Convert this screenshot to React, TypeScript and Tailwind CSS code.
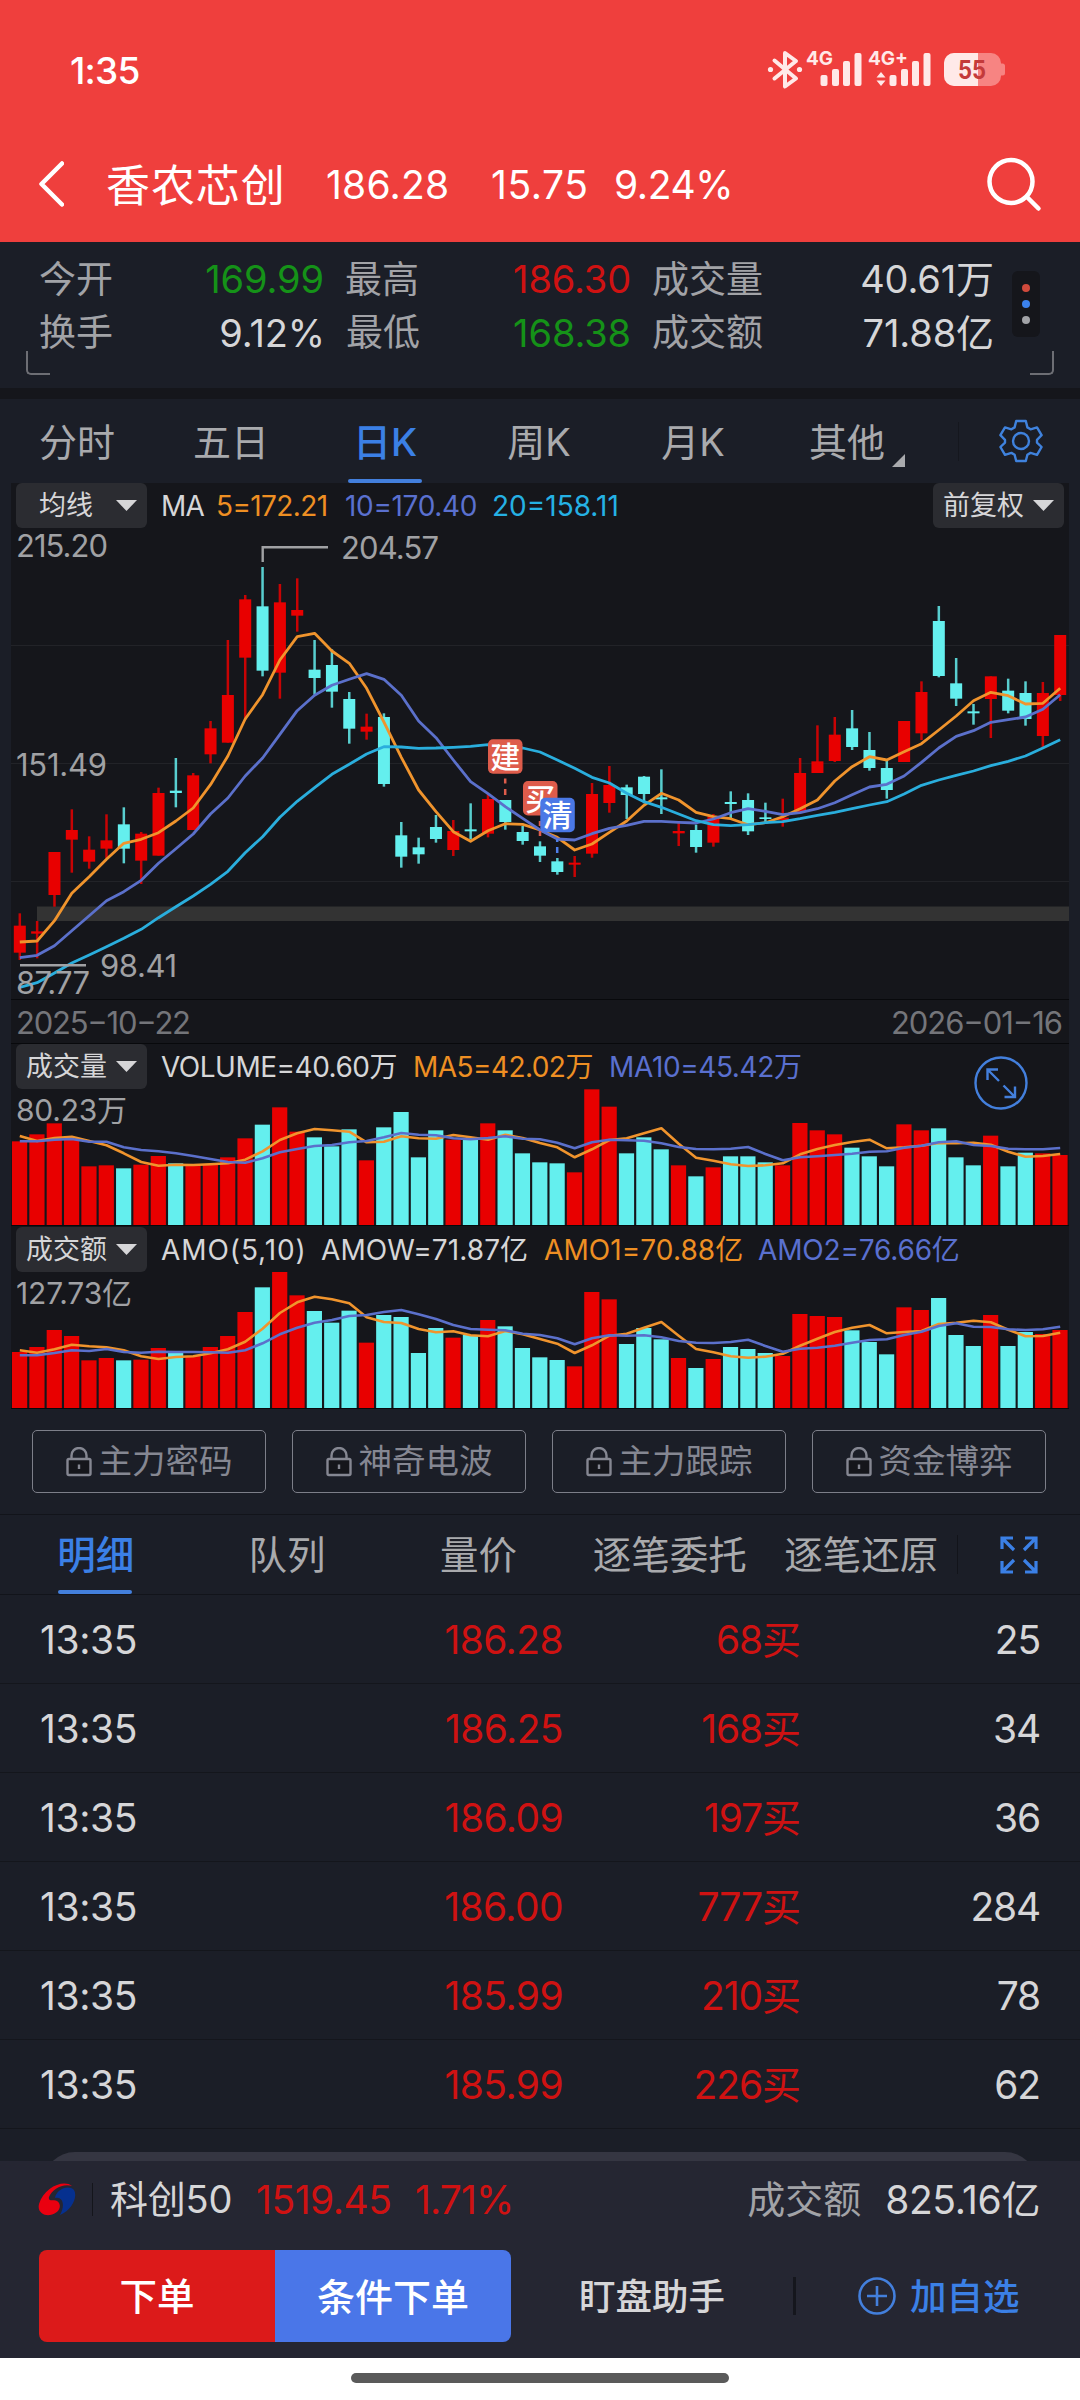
import { clsx } from "clsx";

const UP = "#e80000";
const DOWN = "#64efee";
const PITCH = 17.34;

// [direction, body top, body bottom, high, low] for each day, on a grid three times finer than the chart
const candles: [string, number, number, number, number][] = [
  ["r", 1217, 1298, 1180, 1320],
  ["r", 1234, 1241, 1203, 1315],
  ["r", 996, 1125, 996, 1160],
  ["r", 930, 959, 868, 1058],
  ["r", 989, 1025, 949, 1046],
  ["r", 961, 986, 883, 1015],
  ["c", 913, 986, 862, 1030],
  ["r", 941, 1022, 936, 1092],
  ["r", 819, 1007, 803, 1007],
  ["c", 812, 819, 714, 862],
  ["r", 766, 930, 759, 930],
  ["r", 625, 703, 603, 730],
  ["r", 525, 668, 360, 668],
  ["r", 238, 413, 225, 600],
  ["c", 259, 452, 141, 469],
  ["r", 247, 458, 192, 536],
  ["r", 270, 287, 175, 335],
  ["c", 449, 474, 360, 524],
  ["c", 435, 515, 388, 563],
  ["c", 537, 626, 516, 671],
  ["r", 620, 635, 581, 659],
  ["c", 591, 792, 580, 800],
  ["c", 946, 1010, 906, 1043],
  ["c", 982, 1003, 953, 1031],
  ["c", 921, 957, 885, 968],
  ["r", 933, 990, 900, 1008],
  ["c", 928, 934, 850, 958],
  ["r", 837, 941, 822, 952],
  ["c", 840, 906, 840, 929],
  ["c", 936, 963, 918, 974],
  ["c", 979, 1007, 964, 1026],
  ["c", 1024, 1056, 1014, 1064],
  ["r", 1028, 1034, 1008, 1071],
  ["r", 822, 1001, 789, 1013],
  ["r", 795, 849, 738, 878],
  ["c", 802, 825, 794, 897],
  ["c", 770, 822, 768, 850],
  ["c", 832, 838, 748, 882],
  ["r", 933, 940, 908, 978],
  ["c", 930, 981, 914, 998],
  ["r", 890, 968, 882, 980],
  ["c", 846, 852, 814, 896],
  ["c", 840, 934, 820, 945],
  ["c", 892, 897, 848, 908],
  ["r", 893, 900, 836, 920],
  ["r", 759, 876, 714, 876],
  ["r", 724, 759, 616, 759],
  ["r", 644, 723, 591, 726],
  ["c", 625, 681, 570, 690],
  ["c", 690, 744, 636, 752],
  ["c", 744, 810, 722, 836],
  ["r", 603, 726, 603, 726],
  ["r", 516, 640, 484, 660],
  ["c", 303, 468, 258, 472],
  ["c", 490, 536, 414, 558],
  ["c", 574, 580, 552, 614],
  ["r", 469, 537, 469, 654],
  ["c", 512, 572, 476, 580],
  ["c", 519, 597, 484, 617],
  ["r", 519, 648, 486, 684],
  ["r", 345, 525, 345, 543],
];

const ma5 = [1266, 1263, 1202, 1120, 1070, 1018, 970, 958, 938, 903, 864, 794, 708, 597, 524, 420, 350, 340, 393, 430, 505, 606, 712, 810, 875, 935, 964, 932, 911, 913, 930, 952, 990, 972, 937, 903, 856, 820, 840, 877, 890, 896, 914, 908, 890, 866, 840, 783, 740, 710, 720, 695, 671, 630, 588, 542, 517, 527, 552, 550, 505];
const ma10 = [1313, 1306, 1277, 1232, 1187, 1142, 1115, 1081, 1030, 986, 942, 882, 834, 768, 714, 643, 572, 526, 496, 478, 461, 478, 526, 603, 653, 720, 785, 821, 860, 895, 930, 957, 960, 941, 925, 916, 904, 904, 907, 909, 897, 878, 866, 874, 884, 878, 866, 848, 824, 801, 793, 768, 727, 684, 649, 632, 607, 599, 591, 568, 524];
const ma20 = [1402, 1388, 1359, 1329, 1305, 1280, 1255, 1228, 1193, 1160, 1128, 1093, 1054, 998, 950, 892, 844, 803, 763, 733, 702, 680, 681, 685, 684, 682, 679, 674, 675, 684, 696, 720, 745, 772, 789, 820, 845, 862, 882, 902, 914, 917, 914, 908, 905, 896, 886, 877, 866, 855, 845, 822, 796, 780, 766, 753, 737, 724, 708, 684, 659];

const volume = [336, 315, 282, 331, 411, 408, 417, 406, 380, 402, 408, 407, 384, 327, 286, 234, 307, 324, 351, 300, 393, 294, 248, 384, 303, 331, 328, 282, 303, 372, 399, 402, 429, 180, 232, 372, 324, 360, 408, 441, 414, 381, 381, 399, 408, 281, 303, 315, 355, 381, 411, 285, 303, 297, 384, 408, 319, 411, 370, 372, 377];
const volumeMa5 = [320, 335, 326, 322, 335, 348, 372, 398, 409, 406, 407, 405, 402, 391, 366, 332, 312, 299, 303, 307, 339, 337, 321, 327, 328, 317, 324, 331, 316, 326, 341, 354, 384, 360, 332, 327, 312, 297, 343, 385, 394, 405, 410, 408, 402, 375, 359, 347, 338, 331, 357, 354, 349, 341, 342, 340, 346, 367, 382, 380, 374];
const volumeMa10 = [336, 336, 331, 329, 337, 337, 354, 362, 366, 372, 380, 389, 398, 400, 387, 369, 359, 350, 347, 339, 335, 324, 311, 316, 318, 327, 330, 326, 321, 328, 330, 340, 357, 339, 331, 333, 334, 342, 353, 359, 360, 358, 353, 374, 393, 384, 381, 377, 373, 367, 366, 355, 349, 339, 336, 347, 350, 358, 360, 360, 356];

const amount = [966, 951, 900, 918, 991, 984, 991, 989, 954, 966, 978, 951, 918, 846, 772, 726, 796, 843, 878, 842, 938, 855, 861, 969, 894, 923, 915, 870, 889, 954, 982, 990, 1009, 786, 808, 942, 894, 928, 984, 1014, 987, 951, 957, 969, 978, 852, 858, 861, 901, 936, 973, 832, 840, 804, 915, 948, 855, 948, 906, 912, 900];
const amountMa5 = [961, 968, 958, 944, 949, 952, 961, 979, 987, 981, 979, 970, 958, 935, 896, 849, 817, 800, 808, 820, 862, 876, 879, 897, 907, 904, 916, 919, 903, 913, 927, 941, 969, 946, 917, 911, 893, 876, 917, 957, 967, 979, 983, 980, 971, 947, 926, 906, 893, 885, 910, 906, 903, 882, 878, 872, 877, 899, 919, 918, 908];
const amountMa10 = [976, 976, 969, 961, 963, 957, 966, 968, 965, 966, 966, 967, 968, 961, 940, 913, 893, 878, 870, 858, 855, 846, 840, 853, 867, 885, 897, 899, 901, 911, 915, 925, 943, 925, 916, 917, 916, 922, 933, 938, 939, 936, 929, 948, 965, 956, 953, 947, 938, 930, 928, 915, 905, 888, 880, 890, 891, 898, 900, 898, 890];

const trades = [
  { time: "13:35", price: "186.28", lots: "68", count: "25" },
  { time: "13:35", price: "186.25", lots: "168", count: "34" },
  { time: "13:35", price: "186.09", lots: "197", count: "36" },
  { time: "13:35", price: "186.00", lots: "777", count: "284" },
  { time: "13:35", price: "185.99", lots: "210", count: "78" },
  { time: "13:35", price: "185.99", lots: "226", count: "62" },
];

const line = (values: number[], toY: (v: number) => number) =>
  values.map((v, i) => `${(8.8 + i * PITCH).toFixed(1)},${toY(v).toFixed(1)}`).join(" ");

function StatusBar() {
  return (
    <div className="flex h-[140px] items-center justify-between pl-[70px] pr-[74px]">
      <span className="text-[37px] font-medium leading-none tracking-[-0.02em]">1:35</span>
      <svg width="240" height="44" viewBox="766 48 240 44" fill="#ffe9e8">
        <path
          d="M774.5 60.5 L796 78.5 L785 86.5 V53 L796 61 L774.5 78.5"
          fill="none"
          stroke="#ffe9e8"
          strokeWidth="4"
          strokeLinejoin="round"
          strokeLinecap="round"
        />
        <circle cx="770.5" cy="69.5" r="2.6" />
        <circle cx="799.5" cy="69.5" r="2.6" />
        <text x="806" y="65" fontSize="19" fontWeight="700" textLength="27" lengthAdjust="spacingAndGlyphs">4G</text>
        <rect x="820.5" y="75" width="7" height="11" rx="2" />
        <rect x="832" y="69" width="7" height="17" rx="2" />
        <rect x="843" y="61" width="7" height="25" rx="2" />
        <rect x="854.5" y="53" width="7" height="33" rx="2" />
        <text x="868" y="65" fontSize="19" fontWeight="700" textLength="40" lengthAdjust="spacingAndGlyphs">4G+</text>
        <path d="M876.5 77.5 L881 72 L885.5 77.5Z M876.5 80.5 L881 86 L885.5 80.5Z" />
        <rect x="889.5" y="75" width="7" height="11" rx="2" />
        <rect x="901" y="69" width="7" height="17" rx="2" />
        <rect x="912" y="61" width="7" height="25" rx="2" />
        <rect x="923.5" y="53" width="7" height="33" rx="2" />
        <rect x="944" y="53" width="57" height="33" rx="10" fill="#f78482" />
        <path d="M1001 63.5 h1.5 a2.5 2.5 0 0 1 2.5 2.5 v7 a2.5 2.5 0 0 1 -2.5 2.5 h-1.5Z" fill="#f78482" />
        <path d="M978 53 H954 a10 10 0 0 0 -10 10 v13 a10 10 0 0 0 10 10 h24Z" />
        <text x="958" y="79" fontSize="25" fontWeight="700" fill="#c43a3a" textLength="28" lengthAdjust="spacingAndGlyphs">55</text>
      </svg>
    </div>
  );
}

function TitleBar() {
  return (
    <div className="flex h-[102px] items-center pb-[14px] pl-[38px] pr-[38px]">
      <svg className="mr-[42px]" width="26" height="48" viewBox="0 0 26 48" fill="none" stroke="#fff" strokeWidth="4.5" strokeLinecap="round" strokeLinejoin="round">
        <path d="M24 3.5 L3.5 24 L24 44.5" />
      </svg>
      <span className="w-[220px] pt-1 text-[44px] leading-none tracking-[0.02em]">香农芯创</span>
      <span className="w-[165px] text-[39px] leading-none tracking-[0.006em]">186.28</span>
      <span className="w-[123px] text-[39px] leading-none tracking-[0.015em]">15.75</span>
      <span className="text-[39px] leading-none tracking-[-0.01em]">9.24%</span>
      <svg className="ml-auto" width="56" height="56" viewBox="0 0 56 56" fill="none" stroke="#fff" strokeWidth="4.5" strokeLinecap="round">
        <circle cx="25" cy="25.5" r="21.5" />
        <path d="M41 41 L52.5 52.5" />
      </svg>
    </div>
  );
}

function Stat({ label, value, tone, className }: { label: string; value: string; tone: string; className: string }) {
  return (
    <div className={clsx("flex items-center justify-between", className)}>
      <span className="text-[37px] leading-none text-[#a2a3a7]">{label}</span>
      <span className={clsx("text-[38px] leading-none tracking-[-0.003em]", tone)}>{value}</span>
    </div>
  );
}

function QuoteStats() {
  return (
    <section className="relative flex h-[146px] bg-[#1b1e27] pl-[39px] pt-[10px]">
      <div className="flex w-[956px] flex-col">
        <div className="flex h-[54px] gap-[21px]">
          <Stat label="今开" value="169.99" tone="text-[#159218]" className="w-[285px]" />
          <Stat label="最高" value="186.30" tone="text-[#cf1212]" className="w-[286px]" />
          <Stat label="成交量" value="40.61万" tone="text-[#d6d6d8]" className="w-[342px]" />
        </div>
        <div className="flex h-[53px] gap-[21px]">
          <Stat label="换手" value="9.12%" tone="text-[#d6d6d8]" className="w-[286px]" />
          <Stat label="最低" value="168.38" tone="text-[#159218]" className="w-[285px]" />
          <Stat label="成交额" value="71.88亿" tone="text-[#d6d6d8]" className="w-[342px]" />
        </div>
      </div>
      <div className="ml-[17px] mt-[19px] flex h-[66px] w-[28px] flex-col items-center justify-center gap-2 rounded-md bg-[#15161b]">
        <i className="size-2 rounded-full bg-[#d04a3c]" />
        <i className="size-2 rounded-full bg-[#3b82ee]" />
        <i className="size-2 rounded-full bg-[#a2a3a7]" />
      </div>
      <i className="absolute bottom-[13px] left-[26px] size-6 rounded-bl-[5px] border-b-2 border-l-2 border-[#6d6e74]" />
      <i className="absolute bottom-[13px] right-[26px] size-6 rounded-br-[5px] border-b-2 border-r-2 border-[#6d6e74]" />
    </section>
  );
}

function GearIcon() {
  return (
    <svg className="ml-[40px] self-center" width="44" height="44" viewBox="0 0 44 44" fill="none" stroke="#3f82dd" strokeWidth="2.4" strokeLinejoin="round">
      <path d="M17.2 2 H26.8 L28.4 8.4 L31.6 10.3 L38 8.4 L42.6 16.2 L38 20.8 V23.6 L42.6 28 L38 35.800 L31.6 33.900 L28.400 35.800 L26.800 42 H17.200 L15.600 35.800 L12.400 33.900 L6 35.800 L1.400 28 L6 23.600 V20.800 L1.400 16.200 L6 8.400 L12.400 10.300 L15.600 8.400Z" />
      <circle cx="22" cy="22" r="8" />
    </svg>
  );
}

function PeriodTabs() {
  return (
    <nav className="flex h-[84px] items-stretch bg-[#1b1e27]">
      {["分时", "五日", "日K", "周K", "月K", "其他"].map((tab) => (
        <div key={tab} className={clsx("relative flex w-[154px] justify-center text-[38px]", tab === "日K" ? "font-medium text-[#3b80e6]" : "text-[#a9aaad]")}>
          <span className="leading-[87px]">{tab}</span>
          {tab === "日K" && <i className="absolute bottom-0 left-10 h-1 w-[74px] rounded-sm bg-[#437fdc]" />}
          {tab === "其他" && (
            <svg className="absolute bottom-4 right-[19px]" width="13" height="13" viewBox="0 0 13 13">
              <path d="M13 0 V13 H0Z" fill="#a9aaad" />
            </svg>
          )}
        </div>
      ))}
      <i className="ml-[34px] h-[39px] w-px self-center bg-[#15171e]" />
      <GearIcon />
    </nav>
  );
}

function Picker({ label, className }: { label: string; className?: string }) {
  return (
    <div className={clsx("flex h-[45px] w-[131px] shrink-0 items-center justify-end gap-[9px] rounded-md bg-[#2b2c31] pr-[10px] text-[27px] leading-none text-[#d6d6d8]", className)}>
      {label}
      <svg width="21" height="11" viewBox="0 0 21 11">
        <path d="M0 0 H21 L10.5 11Z" fill="#d6d6d8" />
      </svg>
    </div>
  );
}

function PriceChart() {
  const y = (v: number) => v / 3;
  return (
    <svg className="absolute left-0 top-[37px]" width="1058" height="525" viewBox="0 0 1058 525">
      {[125.5, 243.5, 361.5].map((gy) => (
        <path key={gy} d={`M0 ${gy} H1058`} stroke="#222328" />
      ))}
      <path d="M0 479.5 H1058 M0 523.5 H1058" stroke="#08090c" />
      <rect x="26" y="386.5" width="1032" height="14.5" fill="#333333" />
      {candles.map(([dir, top, bottom, high, low], i) => {
        const x = 8.8 + i * PITCH;
        const color = dir === "r" ? UP : DOWN;
        return (
          <g key={i}>
            <rect x={x - 1.25} y={y(high)} width="2.5" height={y(low - high)} fill={color} opacity="0.85" />
            <rect x={x - 6} y={y(top)} width="12" height={y(bottom - top)} fill={color} />
          </g>
        );
      })}
      <g fill="none" strokeWidth="2.8" strokeLinejoin="round">
        <polyline points={line(ma5, y)} stroke="#f0942d" />
        <polyline points={line(ma10, y)} stroke="#5b70cb" />
        <polyline points={line(ma20, y)} stroke="#2aaedd" />
      </g>
      <path d="M251.7 42 V27.3 H317 M9 445.3 H75" fill="none" stroke="#a0a1a4" strokeWidth="2.4" />
      <g fill="#a0a1a4" fontSize="31">
        <text x="5" y="36.5" textLength="92">215.20</text>
        <text x="5" y="256" textLength="91">151.49</text>
        <text x="5" y="473.5" textLength="74">87.77</text>
        <text x="89" y="456.5" textLength="77">98.41</text>
        <text x="330" y="39" textLength="98">204.57</text>
      </g>
      <g fill="#74757a" fontSize="31">
        <text x="5" y="513.5" textLength="175">2025−10−22</text>
        <text x="880" y="513.5" textLength="172">2026−01−16</text>
      </g>
      <g strokeWidth="2.5" fill="none">
        <path d="M494.2 258.5 v5 M494.2 269 v6 M529 301 v5 M529 311 v5" stroke="#de5c4b" />
        <path d="M546.2 319 v3 M546.2 327 v6" stroke="#4f7fea" />
      </g>
      <g fontSize="30" fontWeight="500" textAnchor="middle">
        <rect x="477" y="219.3" width="34.5" height="34.5" rx="5" fill="#de5c4b" />
        <text x="494.3" y="247.5" fill="#fff">建</text>
        <rect x="512" y="261" width="34.5" height="34.5" rx="5" fill="#de5c4b" />
        <text x="529.3" y="289.5" fill="#fff">买</text>
        <rect x="529.3" y="277.8" width="34.5" height="34.5" rx="5" fill="#4a78e6" />
        <text x="546.5" y="306" fill="#fff">清</text>
      </g>
    </svg>
  );
}

function BarChart({ bars, fast, slow, base, peak, className }: { bars: number[]; fast: number[]; slow: number[]; base: number; peak: string; className: string }) {
  const y = (v: number) => 182 - (base - v) / 3;
  return (
    <svg className={clsx("absolute left-0", className)} width="1058" height="184" viewBox="0 0 1058 184">
      <path d="M0 182.5 H1058" stroke="#08090c" />
      {bars.map((top, i) => (
        <rect key={i} x={1 + i * PITCH} y={y(top)} width="15.2" height={182 - y(top)} fill={candles[i][0] === "r" ? UP : DOWN} />
      ))}
      <g fill="none" strokeWidth="2.6" strokeLinejoin="round">
        <polyline points={line(fast, y)} stroke="#f0942d" />
        <polyline points={line(slow, y)} stroke="#5b70cb" />
      </g>
      <text x="5" y="77.5" fontSize="30" fill="#a0a1a4" textLength={peak.length > 6 ? 116 : 111}>
        {peak}
      </text>
    </svg>
  );
}

function ChartPanel() {
  return (
    <section className="relative mx-[11px] h-[926px] bg-[#15161b] text-[28px] leading-none">
      <PriceChart />
      <BarChart bars={volume} fast={volumeMa5} slow={volumeMa10} base={587} peak="80.23万" className="top-[560px]" />
      <BarChart bars={amount} fast={amountMa5} slow={amountMa10} base={1134} peak="127.73亿" className="top-[743px]" />
      <div className="relative flex h-[561px] items-start px-[5px]">
        <Picker label="均线" className="gap-[23px]" />
        <div className="flex h-[45px] items-center">
          <span className="ml-[14px] w-[55px] tracking-[-0.03em] text-[#d6d6d8]">MA</span>
          <span className="w-[129px] tracking-[-0.022em] text-[#ee8f23]">5=172.21</span>
          <span className="w-[147px] tracking-[-0.012em] text-[#5a70cf]">10=170.40</span>
          <span className="tracking-[0em] text-[#25b1e4]">20=158.11</span>
        </div>
        <Picker label="前复权" className="ml-auto" />
      </div>
      <div className="relative flex h-[183px] items-start px-[5px]">
        <Picker label="成交量" />
        <div className="flex h-[46px] items-center whitespace-nowrap">
          <span className="ml-[14px] w-[252px] tracking-[-0.018em] text-[#d6d6d8]">VOLUME=40.60万</span>
          <span className="w-[196px] tracking-[-0.02em] text-[#ee8f23]">MA5=42.02万</span>
          <span className="tracking-[-0.014em] text-[#5a70cf]">MA10=45.42万</span>
        </div>
        <svg className="ml-auto mr-[36px] mt-[12px]" width="54" height="54" viewBox="0 0 54 54" fill="none" stroke="#437fdc" strokeWidth="2.4">
          <circle cx="27" cy="27" r="25.5" />
          <path d="M25 25 L13.5 13.5 M13.5 24 V13.5 H24 M29.5 29.5 L41 41 M41 30.5 V41 H30.5" />
        </svg>
      </div>
      <div className="relative flex h-[182px] items-start px-[5px]">
        <Picker label="成交额" />
        <div className="flex h-[46px] items-center whitespace-nowrap">
          <span className="ml-[14px] w-[160px] tracking-[0.033em] text-[#d6d6d8]">AMO(5,10)</span>
          <span className="w-[223px] tracking-[0.003em] text-[#d6d6d8]">AMOW=71.87亿</span>
          <span className="w-[214px] tracking-[0.003em] text-[#ee8f23]">AMO1=70.88亿</span>
          <span className="tracking-[-0.006em] text-[#5a70cf]">AMO2=76.66亿</span>
        </div>
      </div>
    </section>
  );
}

function LockedTools() {
  return (
    <div className="flex h-[105px] gap-[26px] px-8 pt-[21px]">
      {["主力密码", "神奇电波", "主力跟踪", "资金博弈"].map((name) => (
        <div key={name} className="flex h-[63px] w-[234px] items-center justify-center gap-[7px] rounded-[5px] border-[1.5px] border-[#7d7f89] pt-px text-[33.5px] leading-none text-[#858792]">
          <svg width="26" height="30" viewBox="0 0 26 30" fill="none" stroke="#858792" strokeWidth="2.4">
            <rect x="1.5" y="12" width="23" height="16" rx="1.5" fill="#15161b" />
            <path d="M5.5 12 V8.5 a7.5 7.5 0 0 1 15 0 V12 M13 17.5 V22" />
          </svg>
          {name}
        </div>
      ))}
    </div>
  );
}

function DetailTabs() {
  return (
    <nav className="flex h-[81px] items-stretch border-y border-[#12141a]">
      {["明细", "队列", "量价", "逐笔委托", "逐笔还原"].map((tab, i) => (
        <div key={tab} className={clsx("relative flex w-[191.4px] justify-center text-[38.5px]", i === 0 ? "font-medium text-[#3b80e6]" : "text-[#a9aaad]")}>
          <span className="whitespace-nowrap leading-[80px]">{tab}</span>
          {i === 0 && <i className="absolute bottom-0 left-[58px] h-1 w-[74px] rounded-sm bg-[#437fdc]" />}
        </div>
      ))}
      <i className="h-[39px] w-px self-center bg-[#12141a]" />
      <svg className="ml-[42px] self-center" width="38" height="38" viewBox="0 0 38 38" fill="none" stroke="#3b80e6" strokeWidth="3.2">
        <path d="M2 13 V2 H13 M2 2 L14 14 M25 2 H36 V13 M36 2 L24 14 M2 25 V36 H13 M2 36 L14 24 M36 25 V36 H25 M36 36 L24 24" />
      </svg>
    </nav>
  );
}

function TradeList() {
  return (
    <div className="grid h-[534px] grid-rows-6 text-[39px] leading-none tracking-[-0.015em]">
      {trades.map((trade, i) => (
        <div key={i} className="flex items-center border-b border-[#14161c] px-10 pt-px">
          <span className="w-[200px] tracking-[-0.01em] text-[#d6d6d8]">{trade.time}</span>
          <span className="w-[323px] text-right text-[#cf1212]">{trade.price}</span>
          <span className="w-[237px] text-right tracking-[-0.028em] text-[#cf1212]">{trade.lots}买</span>
          <span className="ml-auto tracking-[-0.03em] text-[#d6d6d8]">{trade.count}</span>
        </div>
      ))}
    </div>
  );
}

function BottomBar() {
  return (
    <footer className="h-[197px] bg-[#252632]">
      <div className="flex h-[76px] items-center pl-[38px] pr-10 text-[39px] leading-none">
        <svg width="38" height="35" viewBox="0 0 38 35">
          <path d="M36 8 C30 2 18 8 17 16 C24 14 28 22 22 33 C34 28 40 15 36 8Z" fill="#06308f" />
          <path d="M34 4 C26 -3 6 5 1 22 C-1 30 6 34 12 33 C21 32 25 23 19 19 C15 17 10 20 11 15 C14 7 25 1 34 4Z" fill="#ea0010" />
        </svg>
        <i className="ml-4 h-[33px] w-px bg-[#14151b]" />
        <span className="ml-[17px] w-[146px] text-[38px] tracking-[-0.005em] text-[#d6d6d8]">科创50</span>
        <span className="w-[159px] tracking-[-0.012em] text-[#cf1212]">1519.45</span>
        <span className="tracking-[-0.022em] text-[#cf1212]">1.71%</span>
        <span className="ml-auto text-[38px] text-[#a2a3a7]">成交额</span>
        <span className="ml-6 tracking-[-0.01em] text-[#d6d6d8]">825.16亿</span>
      </div>
      <div className="mt-[13px] flex h-[92px] items-center pl-[39px]">
        <button className="h-full w-[236px] rounded-l-lg bg-[#dc1a1a] pt-0.5 text-[37.5px] font-medium text-white">下单</button>
        <button className="h-full w-[236px] rounded-r-lg bg-[#4a76e8] pt-0.5 text-[38px] font-medium text-white">条件下单</button>
        <span className="ml-[68px] pt-0.5 text-[36.5px] font-medium text-[#d6d6d8]">盯盘助手</span>
        <i className="ml-[68px] h-[38px] w-[3px] bg-[#15161d]" />
        <svg className="ml-[62px] mr-[14px]" width="38" height="38" viewBox="0 0 38 38" fill="none" stroke="#437fdc" strokeWidth="2.6">
          <circle cx="19" cy="19" r="17.5" />
          <path d="M9 19 H29 M19 9 V29" />
        </svg>
        <span className="pt-0.5 text-[36.5px] font-medium text-[#3b80e6]">加自选</span>
      </div>
    </footer>
  );
}

export default function App() {
  return (
    <div className="flex h-[2400px] w-[1080px] flex-col overflow-hidden bg-[#1b1e27] font-['Inter','Noto_Sans_CJK_SC',sans-serif]">
      <header className="h-[242px] bg-[#ef3f3d] text-white">
        <StatusBar />
        <TitleBar />
      </header>
      <QuoteStats />
      <div className="h-[11px] bg-[#15161b]" />
      <PeriodTabs />
      <ChartPanel />
      <LockedTools />
      <DetailTabs />
      <TradeList />
      <div className="flex h-[32px] items-end overflow-hidden">
        <div className="mx-[43px] h-[9px] flex-1 overflow-hidden">
          <div className="h-16 rounded-t-[32px] bg-[#353642]" />
        </div>
      </div>
      <BottomBar />
      <div className="flex flex-1 justify-center bg-white pt-[15px]">
        <i className="h-[10px] w-[378px] rounded-full bg-[#5a5a5a]" />
      </div>
    </div>
  );
}
